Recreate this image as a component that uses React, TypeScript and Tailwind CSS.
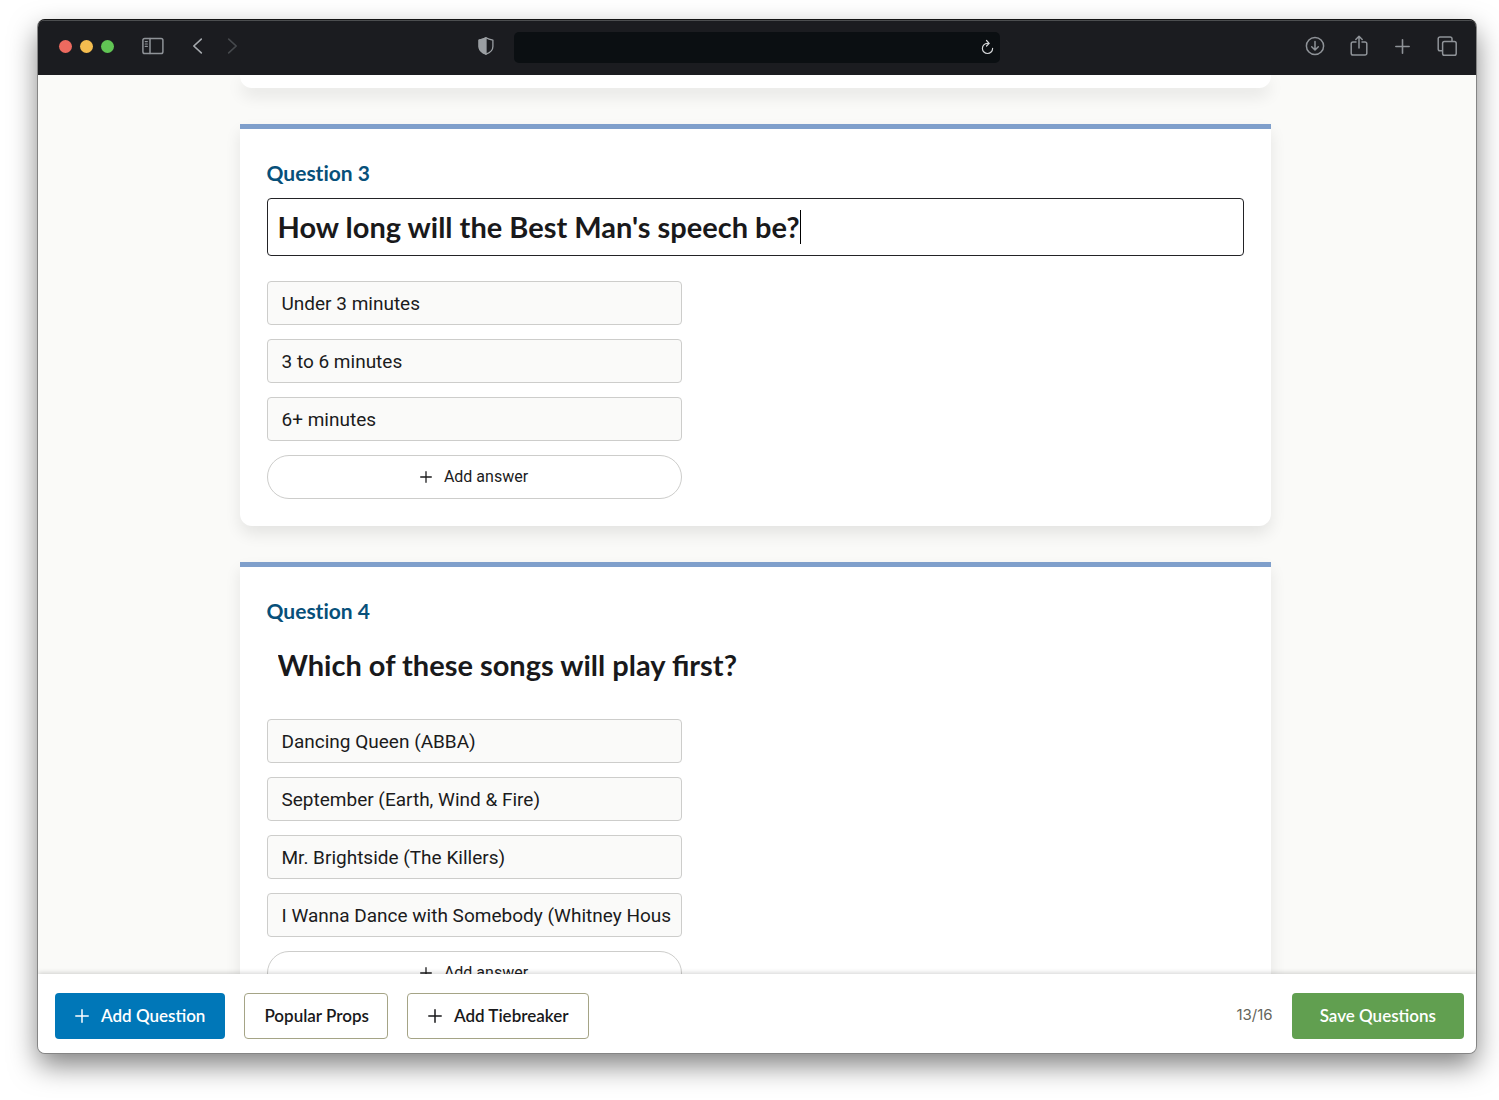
import type { ReactNode } from "react";

type Question = {
  number: number;
  prompt: string;
  answers: string[];
  focused?: boolean;
};

const questions: Question[] = [
  {
    number: 3,
    prompt: "How long will the Best Man's speech be?",
    answers: ["Under 3 minutes", "3 to 6 minutes", "6+ minutes"],
    focused: true,
  },
  {
    number: 4,
    prompt: "Which of these songs will play first?",
    answers: [
      "Dancing Queen (ABBA)",
      "September (Earth, Wind & Fire)",
      "Mr. Brightside (The Killers)",
      "I Wanna Dance with Somebody (Whitney Hous",
    ],
  },
];

function Plus({ className }: { className: string }) {
  return (
    <svg className={className} viewBox="0 0 14 14" fill="none" stroke="currentColor" strokeWidth="1.5" strokeLinecap="round" aria-hidden="true">
      <path d="M7 0.8v12.4M0.8 7h12.4" />
    </svg>
  );
}

function IconButton({ label, className, children }: { label: string; className?: string; children: ReactNode }) {
  return (
    <button type="button" aria-label={label} className={className}>
      {children}
    </button>
  );
}

function TitleBar() {
  return (
    <header className="grid h-[55px] shrink-0 grid-cols-[1fr_486px_1fr] items-center border-t border-[#4c4e50] bg-[#1b1c20] pb-0.5 text-[#8f9398]">
      <div className="flex items-center pb-0.5 pl-[21px] pr-5">
        <div className="flex gap-2">
          <button type="button" aria-label="Close" className="size-[13px] rounded-full bg-[#ed6a5f]" />
          <button type="button" aria-label="Minimize" className="size-[13px] rounded-full bg-[#f5bd4f]" />
          <button type="button" aria-label="Zoom" className="size-[13px] rounded-full bg-[#61c554]" />
        </div>
        <IconButton label="Sidebar" className="ml-7">
          <svg className="h-[18px] w-[22px]" viewBox="0 0 22 18" fill="none" stroke="currentColor" strokeWidth="1.5" strokeLinecap="round">
            <rect x="0.9" y="1.4" width="20" height="15.2" rx="1.8" />
            <path d="M8 1.4v15.2" />
            <path d="M3.2 4.6h2.2M3.2 7h2.2M3.2 9.4h2.2" strokeWidth="1.1" />
          </svg>
        </IconButton>
        <IconButton label="Back" className="ml-7">
          <svg className="h-4 w-[11px]" viewBox="0 0 11 16" fill="none" stroke="#a5a9ad" strokeWidth="1.6" strokeLinecap="round" strokeLinejoin="round">
            <path d="M9.3 1.1 1.8 8l7.5 6.9" />
          </svg>
        </IconButton>
        <IconButton label="Forward" className="ml-6">
          <svg className="h-4 w-[11px]" viewBox="0 0 11 16" fill="none" stroke="#46494d" strokeWidth="1.6" strokeLinecap="round" strokeLinejoin="round">
            <path d="M1.7 1.1 9.2 8l-7.5 6.9" />
          </svg>
        </IconButton>
        <IconButton label="Privacy report" className="ml-auto">
          <svg className="h-[18px] w-4" viewBox="0 0 16 18" fill="none" stroke="#9b9fa3" strokeWidth="1.3" strokeLinejoin="round">
            <path d="M8 .8c2.1 1.3 4.3 1.9 6.9 2.3v6.4c0 3.8-3 6.3-6.9 7.7-3.9-1.4-6.9-3.900-6.900-7.700V3.100C3.700 2.700 5.900 2.100 8 .8Z" />
            <path d="M8 .8v16.400c-3.900-1.400-6.900-3.900-6.900-7.700V3.100C3.700 2.700 5.900 2.100 8 .8Z" fill="#9b9fa3" />
          </svg>
        </IconButton>
      </div>
      <div className="flex h-[31px] items-center rounded-[5px] bg-[#0b0f12] pr-1.5">
        <input type="text" aria-label="Address" className="min-w-0 flex-1 bg-transparent px-3 text-sm text-gray-200 outline-none" />
        <IconButton label="Reload">
          <svg className="h-4 w-[13px]" viewBox="0 0 13 16" fill="none" stroke="#d4d6d8" strokeWidth="1.2" strokeLinecap="round" strokeLinejoin="round">
            <path d="M7.6 4.3H6.4a5.1 5.1 0 1 0 5.2 5.1" />
            <path d="M5.5 1.5 8.2 4.3 5.5 7" />
          </svg>
        </IconButton>
      </div>
      <div className="flex items-center justify-end gap-[25px] pb-0.5 pr-[19px]">
        <IconButton label="Downloads">
          <svg className="size-5" viewBox="0 0 20 20" fill="none" stroke="currentColor" strokeWidth="1.5" strokeLinecap="round" strokeLinejoin="round">
            <circle cx="10" cy="10" r="8.6" />
            <path d="M10 5.4v8.4M6.7 10.7l3.3 3.3 3.3-3.3" />
          </svg>
        </IconButton>
        <IconButton label="Share">
          <svg className="h-[22px] w-[18px]" viewBox="0 0 18 22" fill="none" stroke="currentColor" strokeWidth="1.5" strokeLinecap="round" strokeLinejoin="round">
            <path d="M6 7H3a1.800 1.800 0 0 0-1.800 1.800v9.400A1.800 1.800 0 0 0 3 20h12a1.800 1.800 0 0 0 1.800-1.800V8.800A1.800 1.800 0 0 0 15 7h-3" />
            <path d="M9 13V1.500M5.800 4.500 9 1.300l3.200 3.200" />
          </svg>
        </IconButton>
        <IconButton label="New tab" className="px-0.5">
          <Plus className="size-[15px]" />
        </IconButton>
        <IconButton label="Tab overview">
          <svg className="size-5" viewBox="0 0 20 20" fill="none" stroke="currentColor" strokeWidth="1.5" strokeLinejoin="round">
            <rect x="5.6" y="5.6" width="13.6" height="13.6" rx="1.8" />
            <path d="M5.600 14.800H3a1.800 1.800 0 0 1-1.800-1.800V2.800A1.800 1.800 0 0 1 3 1h10.200A1.800 1.800 0 0 1 15 2.800v2.800" />
          </svg>
        </IconButton>
      </div>
    </header>
  );
}

function QuestionCard({ question }: { question: Question }) {
  const { number, prompt, answers, focused } = question;
  const id = `question-${number}`;
  return (
    <section className="shrink-0 rounded-b-xl border-t-[5px] border-[#7f9fcb] bg-white px-[27px] pt-[30px] pb-[27px] shadow-[0_8px_16px_rgba(0,0,0,0.09)]">
      <h2 id={id} className="font-[Lato,sans-serif] text-[21px] leading-7 font-bold text-[#07507a] [font-variant-ligatures:none]">
        Question {number}
      </h2>
      <label
        className={
          focused
            ? "mt-[11px] flex h-[58px] items-center rounded-[4px] border border-[#232326] px-2.5"
            : "mt-[11px] flex h-[58px] items-center rounded-[4px] border border-transparent px-2.5"
        }
      >
        <input
          type="text"
          aria-labelledby={id}
          defaultValue={prompt}
          className="field-sizing-content max-w-full font-[Lato,sans-serif] text-[29px] leading-9 font-bold text-[#19191b] caret-transparent outline-none"
        />
        {focused && <span className="h-[34px] w-px bg-black" />}
      </label>
      <div className="mt-[25px] flex w-full max-w-[415px] flex-col gap-3.5">
        {answers.map((answer, index) => (
          <input
            key={answer}
            type="text"
            aria-label={`Answer ${index + 1}`}
            defaultValue={answer}
            className="h-11 w-full rounded-[4px] border border-[#cdcdcb] bg-[#fafaf9] pr-2 pl-3.5 text-[19px] text-[#1b1b1c] outline-none"
          />
        ))}
        <button type="button" className="flex h-11 items-center justify-center gap-3 rounded-full border border-[#cdcdcb] bg-white text-base text-[#1b1b1c]">
          <Plus className="size-3" />
          Add answer
        </button>
      </div>
    </section>
  );
}

function ActionBar() {
  return (
    <footer className="relative flex h-[79px] shrink-0 items-center gap-[19px] bg-white pt-1 pr-3 pl-[17px] font-[Lato,sans-serif] text-[17px] font-semibold text-[#19191b] shadow-[0_-1px_5px_rgba(0,0,0,0.18)]">
      <button type="button" className="flex h-[46px] items-center gap-3 rounded-[4px] bg-[#0077b8] px-5 text-white">
        <Plus className="size-[14px]" />
        Add Question
      </button>
      <button type="button" className="h-[46px] rounded-[4px] border border-[#a5a486] bg-white px-[19px] pr-[18px]">
        Popular Props
      </button>
      <button type="button" className="flex h-[46px] items-center gap-3 rounded-[4px] border border-[#a5a486] bg-white px-5">
        <Plus className="size-[14px]" />
        Add Tiebreaker
      </button>
      <span className="ml-auto font-[Inter,sans-serif] text-[15px] font-normal text-[#65655a]">13/16</span>
      <button type="button" className="h-[46px] rounded-[4px] bg-[#619f50] px-7 text-white">
        Save Questions
      </button>
    </footer>
  );
}

export default function App() {
  return (
    <div className="flex h-screen flex-col bg-white pt-5 pr-[23px] pb-[47px] pl-[38px] font-[Roboto,sans-serif]">
      <div className="flex min-h-0 flex-1 flex-col rounded-[7px] shadow-[0_-1px_0_0_#141414,0_0_0_1px_#858585,0_12px_28px_rgba(0,0,0,0.5)]">
        <div className="flex min-h-0 flex-1 flex-col overflow-hidden rounded-[7px]">
          <TitleBar />
          <main className="min-h-0 flex-1 overflow-hidden bg-[#fafaf8] pr-1">
            <div className="mx-auto flex w-full max-w-[1031px] flex-col">
              <div className="h-[13px] shrink-0 rounded-b-xl bg-white shadow-[0_8px_16px_rgba(0,0,0,0.09)]" />
              <div className="mt-9 flex flex-col gap-9">
                {questions.map((question) => (
                  <QuestionCard key={question.number} question={question} />
                ))}
              </div>
            </div>
          </main>
          <ActionBar />
        </div>
      </div>
    </div>
  );
}
